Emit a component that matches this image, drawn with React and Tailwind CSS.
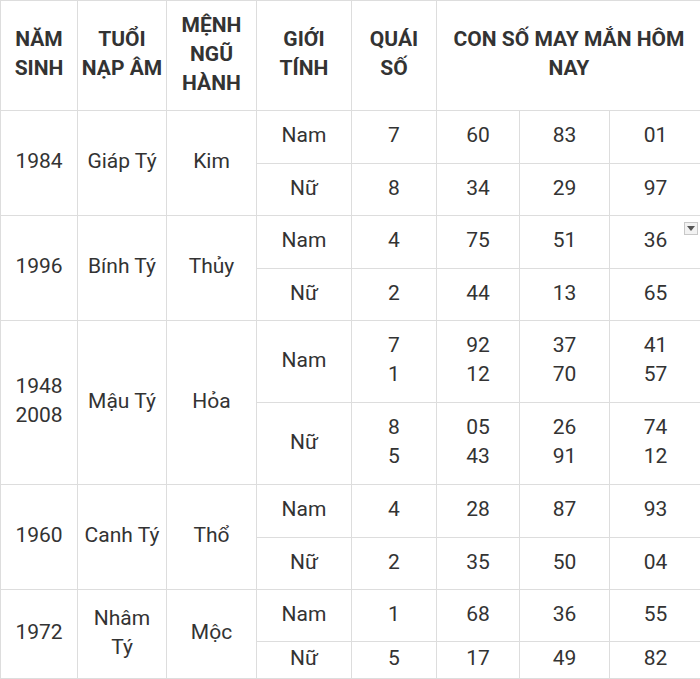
const rows = [
  {
    year: ['1984'],
    tuoi: ['Giáp Tý'],
    menh: 'Kim',
    items: [
      { sex: 'Nam', quai: ['7'], nums: [['60'], ['83'], ['01']], h: 'h-[53px]' },
      { sex: 'Nữ', quai: ['8'], nums: [['34'], ['29'], ['97']], h: 'h-[52px]' },
    ],
  },
  {
    year: ['1996'],
    tuoi: ['Bính Tý'],
    menh: 'Thủy',
    items: [
      { sex: 'Nam', quai: ['4'], nums: [['75'], ['51'], ['36']], h: 'h-[53px]', dropdown: true },
      { sex: 'Nữ', quai: ['2'], nums: [['44'], ['13'], ['65']], h: 'h-[52px]' },
    ],
  },
  {
    year: ['1948', '2008'],
    tuoi: ['Mậu Tý'],
    menh: 'Hỏa',
    items: [
      { sex: 'Nam', quai: ['7', '1'], nums: [['92', '12'], ['37', '70'], ['41', '57']], h: 'h-[82px]' },
      { sex: 'Nữ', quai: ['8', '5'], nums: [['05', '43'], ['26', '91'], ['74', '12']], h: 'h-[82px]' },
    ],
  },
  {
    year: ['1960'],
    tuoi: ['Canh Tý'],
    menh: 'Thổ',
    items: [
      { sex: 'Nam', quai: ['4'], nums: [['28'], ['87'], ['93']], h: 'h-[53px]' },
      { sex: 'Nữ', quai: ['2'], nums: [['35'], ['50'], ['04']], h: 'h-[52px]' },
    ],
  },
  {
    year: ['1972'],
    tuoi: ['Nhâm', 'Tý'],
    menh: 'Mộc',
    items: [
      { sex: 'Nam', quai: ['1'], nums: [['68'], ['36'], ['55']], h: 'h-[52px]' },
      { sex: 'Nữ', quai: ['5'], nums: [['17'], ['49'], ['82']], h: 'h-[37px]' },
    ],
  },
];

const Lines = ({ lines }) => (
  <>
    {lines.map((l, i) => (
      <div key={i}>{l}</div>
    ))}
  </>
);

const cell = 'border border-[#dddddd] text-center align-middle px-0 pt-0 pb-[3px]';

export default function App() {
  return (
    <div className="w-[700px] h-[679px] overflow-hidden bg-white font-['Roboto','Liberation_Sans',sans-serif] text-[21px] leading-[29px] text-[#333333]">
      <table className="w-[701px] border-collapse table-fixed">
        <colgroup>
          <col className="w-[77px]" />
          <col className="w-[89px]" />
          <col className="w-[90px]" />
          <col className="w-[95px]" />
          <col className="w-[85px]" />
          <col className="w-[83px]" />
          <col className="w-[90px]" />
          <col className="w-[92px]" />
        </colgroup>
        <thead>
          <tr className="h-[110px] font-bold">
            <th className={cell}>NĂM<br />SINH</th>
            <th className={cell}>TUỔI<br />NẠP ÂM</th>
            <th className={cell}>MỆNH<br />NGŨ<br />HÀNH</th>
            <th className={cell}>GIỚI<br />TÍNH</th>
            <th className={cell}>QUÁI<br />SỐ</th>
            <th className={`${cell} px-3`} colSpan={3}>CON SỐ MAY MẮN HÔM NAY</th>
          </tr>
        </thead>
        <tbody>
          {rows.map((r) =>
            r.items.map((it, i) => (
              <tr key={r.year[0] + i} className={it.h}>
                {i === 0 && (
                  <>
                    <td className={cell} rowSpan={2}><Lines lines={r.year} /></td>
                    <td className={cell} rowSpan={2}><Lines lines={r.tuoi} /></td>
                    <td className={cell} rowSpan={2}>{r.menh}</td>
                  </>
                )}
                <td className={cell}>{it.sex}</td>
                <td className={cell}><Lines lines={it.quai} /></td>
                {it.nums.map((n, j) => (
                  <td key={j} className={`${cell} ${it.dropdown && j === 2 ? 'relative' : ''}`}>
                    <Lines lines={n} />
                    {it.dropdown && j === 2 && (
                      <span className="absolute right-[3px] top-[6px] w-[14px] h-[13px] border border-[#c8c8c8] bg-[#f2f2f2] flex items-center justify-center">
                        <svg width="8" height="5" viewBox="0 0 8 5">
                          <path d="M0 0h8L4 5z" fill="#555" />
                        </svg>
                      </span>
                    )}
                  </td>
                ))}
              </tr>
            ))
          )}
        </tbody>
      </table>
    </div>
  );
}
